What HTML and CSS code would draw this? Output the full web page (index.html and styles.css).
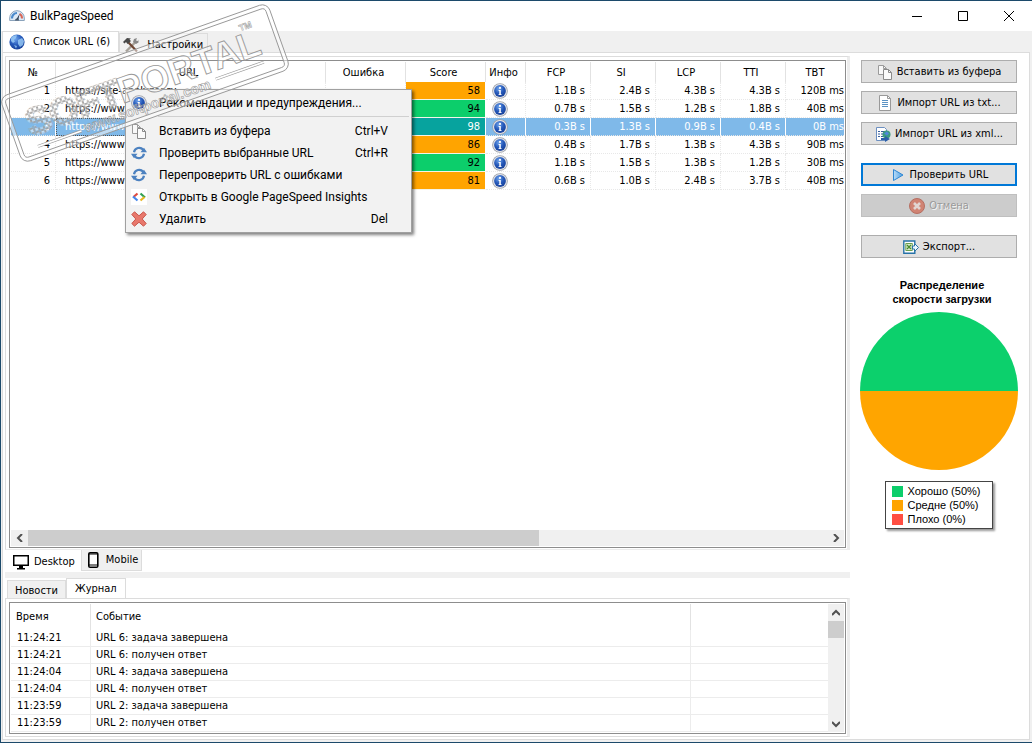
FILE: index.html
```html
<!DOCTYPE html>
<html lang="ru">
<head>
<meta charset="utf-8">
<title>BulkPageSpeed</title>
<link rel="stylesheet" href="styles.css">
</head>
<body>
<svg class="defs" aria-hidden="true">
  <defs>
    <radialGradient id="blue" cx="40%" cy="30%" r="75%"><stop offset="0" stop-color="#6fa4ec"/><stop offset=".55" stop-color="#2457b8"/><stop offset="1" stop-color="#173f96"/></radialGradient>
    <linearGradient id="play" x1="0" x2="1"><stop offset="0" stop-color="#b9dcf8"/><stop offset="1" stop-color="#4b9fe4"/></linearGradient>
    <symbol id="i-info" viewBox="0 0 16 16"><circle cx="8" cy="8" r="7.8" fill="#9b9fa8"/><circle cx="8" cy="8" r="7" fill="#e3e5ea"/><circle cx="8" cy="8" r="5.9" fill="url(#blue)"/><circle cx="8" cy="4.9" r="1.1" fill="#fff"/><path d="M6.6 7h2.2v4.2h.8v.9H6.5v-.9h.8V7.9h-.7z" fill="#fff"/></symbol>
    <symbol id="i-copy" viewBox="0 0 16 16"><path d="M1.5 1.5h5l3 3v6h-8z" fill="#f8f8f8" stroke="#9a9a9a"/><path d="M6.5 1.500v3h3" fill="none" stroke="#9a9a9a"/><path d="M6.500 5.500h5l3 3v7h-8z" fill="#fafafa" stroke="#8a8a8a"/><path d="M11.500 5.500v3h3" fill="none" stroke="#8a8a8a"/></symbol>
    <symbol id="i-sync" viewBox="0 0 16 16"><g fill="none" stroke="#4d82c0" stroke-width="2.200"><path d="M3 7.200A5.200 5.200 0 0 1 12.200 4.800"/><path d="M13 8.800A5.200 5.200 0 0 1 3.800 11.200"/></g><path d="M9.500 7.200h6.500l-3-4.500zM6.500 8.800H0l3 4.500z" fill="#4d82c0"/></symbol>
  </defs>
</svg>
<div class="window">
  <header class="titlebar">
    <svg class="icon" viewBox="0 0 16 16"><path d="M.7 12.500V10a7.300 7.300 0 0 1 14.600 0v2.500z" fill="#dce9f6" stroke="#8aa2bb"/><path d="M3 10.500A5 5 0 0 1 8 5" fill="none" stroke="#4b8acb" stroke-width="2.200"/><path d="M10.500 5.800A5 5 0 0 1 13 10.500" fill="none" stroke="#d96656" stroke-width="2"/><path d="M7 12l3.500-6-1.200 6z" fill="#24354b"/><path d="M6 12.500a2 2 0 0 1 4 0z" fill="#456"/></svg>
    <h1>BulkPageSpeed</h1>
    <div class="winbtns">
      <button aria-label="Свернуть"><svg viewBox="0 0 10 10"><path d="M0 5.500h10"/></svg></button>
      <button aria-label="Развернуть"><svg viewBox="0 0 10 10"><path d="M.5.5h9v9h-9z"/></svg></button>
      <button aria-label="Закрыть"><svg viewBox="0 0 10 10"><path d="M0 0l10 10M10 0L0 10"/></svg></button>
    </div>
  </header>
  <nav class="maintabs">
    <button class="maintab active"><svg class="icon" viewBox="0 0 16 16"><circle cx="8" cy="8" r="7.600" fill="url(#blue)"/><path d="M2 4c2-3 5-3 6-2.500L7 4 5 6l1 1.500L4 9 2 7zM9 6l4-2 2 3-1 4-3 2-2-3zM5 11l3 1-1 2.500z" fill="#9ccdf6" opacity=".8"/></svg>Список URL (6)</button>
    <button class="maintab"><svg class="icon" viewBox="0 0 16 16"><path d="M3 14.500L12.500 5" stroke="#a7a29a" stroke-width="2.400"/><path d="M10 5l1-3 3-1-1 2.500 2 .5.500-1.500v3L13 7z" fill="#888"/><path d="M5 5l9 9.500" stroke="#6f4734" stroke-width="2.200"/><path d="M0 5l4-4 4 .5-1.500 1L8 4 4.500 7 3 5 1.500 6.500z" fill="#484848"/></svg>Настройки</button>
  </nav>
  <main class="page">
    <div class="left">
      <section class="upper">
        <div class="grid-box">
          <div class="grid-view">
          <table class="grid">
            <colgroup><col class="c-num"><col class="c-url"><col class="c-err"><col class="c-score"><col class="c-info"><col class="c-m"><col class="c-m"><col class="c-m"><col class="c-m"><col></colgroup>
            <thead><tr><th>№</th><th>URL</th><th>Ошибка</th><th>Score</th><th>Инфо</th><th>FCP</th><th>SI</th><th>LCP</th><th>TTI</th><th>TBT</th></tr></thead>
            <tbody>
              <tr><td>1</td><td class="url">https://site-analyzer.ru</td><td></td><td class="mid">58</td><td class="info"><svg class="icon"><use href="#i-info"/></svg></td><td>1.1B s</td><td>2.4B s</td><td>4.3B s</td><td>4.3B s</td><td class="last">120B ms</td></tr>
              <tr><td>2</td><td class="url">https://www</td><td></td><td class="good">94</td><td class="info"><svg class="icon"><use href="#i-info"/></svg></td><td>0.7B s</td><td>1.5B s</td><td>1.2B s</td><td>1.8B s</td><td class="last">40B ms</td></tr>
              <tr class="selected"><td>3</td><td class="url">https://www</td><td></td><td class="good">98</td><td class="info"><svg class="icon"><use href="#i-info"/></svg></td><td>0.3B s</td><td>1.3B s</td><td>0.9B s</td><td>0.4B s</td><td class="last">0B ms</td></tr>
              <tr><td>4</td><td class="url">https://www</td><td></td><td class="mid">86</td><td class="info"><svg class="icon"><use href="#i-info"/></svg></td><td>0.4B s</td><td>1.7B s</td><td>1.3B s</td><td>4.3B s</td><td class="last">90B ms</td></tr>
              <tr><td>5</td><td class="url">https://www</td><td></td><td class="good">92</td><td class="info"><svg class="icon"><use href="#i-info"/></svg></td><td>1.1B s</td><td>1.5B s</td><td>1.3B s</td><td>1.2B s</td><td class="last">30B ms</td></tr>
              <tr><td>6</td><td class="url">https://www</td><td></td><td class="mid">81</td><td class="info"><svg class="icon"><use href="#i-info"/></svg></td><td>0.6B s</td><td>1.0B s</td><td>2.4B s</td><td>3.7B s</td><td class="last">40B ms</td></tr>
            </tbody>
          </table>
          </div>
          <div class="hscroll">
            <button aria-label="Влево"><svg viewBox="0 0 8 8"><path d="M6 0L2 4l4 4"/></svg></button>
            <div class="track"><div class="thumb"></div></div>
            <button aria-label="Вправо"><svg viewBox="0 0 8 8"><path d="M2 0l4 4-4 4"/></svg></button>
          </div>
        </div>
      </section>
      <nav class="devtabs">
        <button class="devtab active"><svg class="icon" viewBox="0 0 16 16"><path d="M0 1h16v11H0zM1.500 2.500v8h13v-8z" fill="#000" fill-rule="evenodd"/><path d="M6 12h4v2h2v1.500H4V14h2z"/></svg>Desktop</button>
        <button class="devtab"><svg class="icon" viewBox="0 0 16 16"><rect x="3.800" y=".8" width="9" height="14.400" rx="1.300" fill="#fff" stroke="#000" stroke-width="1.600"/><path d="M4 2h9M4 13h9" stroke="#000"/></svg>Mobile</button>
      </nav>
      <div class="splitter"></div>
      <nav class="logtabs">
        <button class="logtab">Новости</button>
        <button class="logtab active">Журнал</button>
      </nav>
      <section class="lower">
        <div class="log-box">
          <table class="log">
            <colgroup><col class="c-time"><col class="c-event"><col></colgroup>
            <thead><tr><th>Время</th><th>Событие</th><th></th></tr></thead>
            <tbody>
              <tr><td>11:24:21</td><td>URL 6: задача завершена</td><td></td></tr>
              <tr><td>11:24:21</td><td>URL 6: получен ответ</td><td></td></tr>
              <tr><td>11:24:04</td><td>URL 4: задача завершена</td><td></td></tr>
              <tr><td>11:24:04</td><td>URL 4: получен ответ</td><td></td></tr>
              <tr><td>11:23:59</td><td>URL 2: задача завершена</td><td></td></tr>
              <tr><td>11:23:59</td><td>URL 2: получен ответ</td><td></td></tr>
            </tbody>
          </table>
          <div class="vscroll">
            <button aria-label="Вверх"><svg viewBox="0 0 8 8"><path d="M0 6l4-4 4 4"/></svg></button>
            <div class="track"><div class="thumb"></div></div>
            <button aria-label="Вниз"><svg viewBox="0 0 8 8"><path d="M0 2l4 4 4-4"/></svg></button>
          </div>
        </div>
      </section>
    </div>
    <aside class="side">
      <div class="group">
        <button class="btn"><svg class="icon"><use href="#i-copy"/></svg>Вставить из буфера</button>
        <button class="btn"><svg class="icon" viewBox="0 0 16 16"><path d="M2.500.5h8l3 3v12h-11z" fill="#fff" stroke="#999"/><path d="M10.500.5v3h3" fill="none" stroke="#999"/><path d="M5 5.500h6M5 7.500h6M5 9.500h6M5 11.500h6" stroke="#5c93c4"/></svg>Импорт URL из txt...</button>
        <button class="btn"><svg class="icon" viewBox="0 0 16 16"><path d="M1.500 1.500h8l2 2v11h-10z" fill="#fff" stroke="#6c8fc0"/><path d="M3 5.500h2M6 5.500h4M3 8h2M6 8h3M3 10.500h2M6 10.500h2" stroke="#365d9c"/><circle cx="11.500" cy="8.500" r="4" fill="#3b9b80"/><path d="M9 7.500l3-2 2 2-2 2z" fill="#4f87dc"/><path d="M6 12h4v-2l5 3-5 3v-2H6z" fill="#2c5fa8"/></svg>Импорт URL из xml...</button>
      </div>
      <div class="group">
        <button class="btn primary"><svg class="icon" viewBox="0 0 16 16"><path d="M3.500 2.500l9.500 5.500-9.500 5.500z" fill="url(#play)" stroke="#2e86d2"/></svg>Проверить URL</button>
        <button class="btn" disabled><svg class="icon" viewBox="0 0 16 16"><circle cx="8" cy="8" r="7.500" fill="#d08373" stroke="#b56f62"/><path d="M5 5l6 6M11 5l-6 6" stroke="#e2d5d2" stroke-width="2.600"/></svg>Отмена</button>
      </div>
      <div class="group">
        <button class="btn"><svg class="icon" viewBox="0 0 16 16"><path d="M11.800 5V2H.8v12.300h11V12" fill="#fff" stroke="#2773a8" stroke-width="1.400"/><path d="M2.800 4.500h6.500v7H2.800z" fill="#dcebcf" stroke="#6aa04f"/><path d="M4 6l4 4M8 6l-4 4" stroke="#478b2c" stroke-width="1.300"/><path d="M9.500 7h2V4.500l4 4-4 4V10h-2z" fill="#edf7ff" stroke="#2773a8"/></svg>Экспорт...</button>
      </div>
      <figure class="chart">
        <figcaption>Распределение<br>скорости загрузки</figcaption>
        <div class="pie"></div>
        <ul class="legend">
          <li><span class="key good"></span>Хорошо (50%)</li>
          <li><span class="key mid"></span>Средне (50%)</li>
          <li><span class="key bad"></span>Плохо (0%)</li>
        </ul>
      </figure>
    </aside>
  </main>
</div>
<div class="menu">
  <button><svg class="icon"><use href="#i-info"/></svg><span>Рекомендации и предупреждения...</span></button>
  <hr>
  <button><svg class="icon"><use href="#i-copy"/></svg><span>Вставить из буфера</span><kbd>Ctrl+V</kbd></button>
  <button><svg class="icon"><use href="#i-sync"/></svg><span>Проверить выбранные URL</span><kbd>Ctrl+R</kbd></button>
  <button><svg class="icon"><use href="#i-sync"/></svg><span>Перепроверить URL с ошибками</span></button>
  <button><svg class="icon" viewBox="0 0 16 16"><path d="M0 0h16v16H0z" fill="#fff"/><g fill="none" stroke-width="2.200"><path d="M6.500 4.500L2.500 8" stroke="#e04a3f"/><path d="M2 7.500L6.500 11.500" stroke="#4486ec"/><path d="M9.500 4.500L14 8.500" stroke="#30a052"/><path d="M13.500 8L9.500 11.500" stroke="#e8b520"/></g></svg><span>Открыть в Google PageSpeed Insights</span></button>
  <button><svg class="icon" viewBox="0 0 16 16"><path d="M3.500.8L8 4.800 12.500.8l2.700 2.700L11.200 8l4 4.500-2.700 2.700L8 11.200l-4.500 4L.8 12.500l4-4.500-4-4.500z" fill="#e8786c" stroke="#c9574c"/></svg><span>Удалить</span><kbd>Del</kbd></button>
</div>
<svg class="stamp" viewBox="0 0 292 170" aria-hidden="true">
  <defs><pattern id="mesh" width="5" height="5" patternUnits="userSpaceOnUse"><rect x=".5" y=".5" width="4" height="4" rx="1" fill="#fff" fill-opacity=".3" stroke="#999" stroke-width=".7"/></pattern></defs>
  <g transform="translate(145 83) rotate(-19.500)" font-family="Liberation Sans, sans-serif" font-weight="bold">
    <g fill="none">
      <rect x="-140" y="-33" width="280" height="66" rx="6" stroke="#fff" stroke-opacity=".5" stroke-width="4"/>
      <rect x="-142" y="-35" width="284" height="70" rx="8" stroke="#999" stroke-width=".9"/>
      <rect x="-138" y="-31" width="276" height="62" rx="4" stroke="#999" stroke-width=".9"/>
      <path d="M-122 24h46M68 20h51" stroke="#999" stroke-width="3"/>
      <path d="M-122 24h46M68 20h51" stroke="#fff" stroke-width="1.800"/>
    </g>
    <text x="-125" y="12" font-size="37" fill="url(#mesh)" stroke="url(#mesh)" stroke-width="3">SOFT</text>
    <g fill="#fff" fill-opacity=".35" stroke="#999" stroke-width=".9">
      <text x="-28" y="12" font-size="37">PORTAL</text>
      <text x="107" y="-17" font-size="9" stroke-width=".5">TM</text>
      <text x="-72" y="27" font-size="14" stroke-width=".6">www.softportal.com</text>
    </g>
  </g>
</svg>
</body>
</html>
```
FILE: styles.css
```css
* { box-sizing: border-box; }
body {
  margin: 0;
  font: 11px/16px "DejaVu Sans Condensed", "Noto Sans", sans-serif;
  color: #000;
  background: #fff;
}
button { font: inherit; color: inherit; border: 0; padding: 0; background: none; white-space: nowrap; }
table { border-collapse: separate; border-spacing: 0; table-layout: fixed; }
.defs { position: absolute; width: 0; height: 0; }
.icon { width: 16px; height: 16px; flex: none; display: block; }
.window {
  min-height: 100vh;
  display: flex;
  flex-direction: column;
  border: 1px solid #1c4a6b;
  border-right: 0;
  background: #f0f0f0;
}
.titlebar { display: flex; align-items: center; height: 30px; padding-left: 8px; background: #fff; }
.titlebar h1 { flex: 1; margin: 0 0 0 5px; font: 12px/16px Roboto, "Noto Sans", sans-serif; }
.winbtns { display: flex; }
.winbtns button { width: 46px; height: 28px; display: grid; place-items: center; }
.winbtns svg { width: 10px; height: 10px; fill: none; stroke: #000; overflow: visible; }

.maintabs { display: flex; align-items: flex-end; height: 21px; padding-left: 1px; }
.maintab {
  display: flex; align-items: center; gap: 8px;
  height: 19px; padding: 3px 4px 0 3px;
  border: 1px solid #dcdcdc; border-bottom: 0;
}
.maintab.active { height: 21px; padding: 0 8px 0 6px; background: #fff; }

.page {
  flex: 1; display: flex;
  margin: 0 2px 2px 1px;
  border: 1px solid #dcdcdc;
  background: #fff;
}
.left { flex: 1; min-width: 0; display: flex; flex-direction: column; margin-left: 2px; }
.upper { flex: 1; display: flex; margin-top: 3px; padding: 3px 1px 1px 3px; border: 1px solid #dcdcdc; border-right: 3px solid #ececec; border-bottom-color: #ececec; }
.grid-box { flex: 1; min-width: 0; display: flex; flex-direction: column; padding: 1px; border: 1px solid #8d8d8d; }
.grid-view { flex: 1; overflow: hidden; }
.grid { width: 100%; }
.c-num { width: 45px; } .c-url { width: 270px; } .c-err { width: 80px; } .c-score { width: 80px; }
.c-info { width: 40px; } .c-m { width: 65px; }
.grid th { height: 20px; padding: 2px 4px 0 0; font-weight: normal; border-right: 1px solid #e2e2e2; }
.grid th:first-child, .grid th:last-child { padding-right: 0; }
.grid th:last-child, .grid td:last-child { border-right: 0; }
.grid td {
  height: 18px; padding: 0 5px 0 0; line-height: 17px;
  text-align: right; white-space: nowrap; overflow: hidden;
  border-right: 1px dotted #e8e8e8; border-bottom: 1px dotted #e8e8e8;
}
.grid td.url { text-align: left; padding-left: 9px; }
.grid td.info { padding: 0 6px; }
.grid td.last { padding-right: 0; }
.grid .mid, .key.mid { background: #ffa400; }
.grid .good, .key.good { background: #0cce6b; }
.key.bad { background: #ff4e42; }
.grid td.mid, .grid td.good { border-bottom: 1px solid #f4f4e8; border-right: 1px solid #fff; }
.grid .selected td { background: #7fb9e9; color: #fff; border-right-color: #fff; border-right-style: solid; }
.grid .selected td.good { background: #07a39e; }
.grid .selected td.url { outline: 1px dotted #555; outline-offset: -1px; }

.hscroll { display: flex; height: 16px; background: #f0f0f0; }
.hscroll button { width: 17px; display: grid; place-items: center; }
.hscroll .track { flex: 1; }
.hscroll .thumb { width: 64%; height: 16px; background: #cdcdcd; }
.hscroll svg, .vscroll svg { width: 8px; height: 8px; fill: none; stroke: #505050; stroke-width: 2; }

.devtabs { display: flex; align-items: flex-start; height: 22px; padding-left: 1px; }
.devtab { display: flex; align-items: center; gap: 5px; height: 21px; padding: 0 3px; border: 1px solid #dcdcdc; border-top: 0; background: #f0f0f0; }
.devtab.active { height: 22px; padding: 2px 6px 0 7px; border: 0; background: #fff; }
.splitter { height: 6px; background: #f0f0f0; }
.logtabs { display: flex; align-items: flex-end; height: 20px; padding-left: 2px; }
.logtab { height: 18px; padding: 2px 7px 0; border: 1px solid #dcdcdc; border-bottom: 0; background: #f0f0f0; }
.logtab.active { height: 20px; padding: 0 8px; background: #fff; }
.lower { padding: 3px 1px 2px 3px; border: 1px solid #dcdcdc; border-right: 3px solid #ececec; margin-bottom: 2px; }
.log-box { display: flex; padding: 1px; border: 1px solid #8d8d8d; }
.log { flex: 1; }
.c-time { width: 80px; } .c-event { width: 600px; }
.log th { height: 26px; padding: 0 5px; font-weight: normal; text-align: left; border-right: 1px solid #e2e2e2; }
.log th:last-child, .log td:last-child { border-right: 0; }
.log td { height: 17px; padding: 0 6px; line-height: 16px; border-right: 1px solid #ececec; border-bottom: 1px solid #ececec; }
.log td + td { padding-left: 5px; }
.vscroll { display: flex; flex-direction: column; width: 16px; background: #f0f0f0; }
.vscroll button { height: 17px; display: grid; place-items: center; }
.vscroll .track { flex: 1; }
.vscroll .thumb { height: 17px; background: #cdcdcd; }

.side { flex: none; width: 179px; display: flex; flex-direction: column; gap: 18px; padding: 7px 12px 0 11px; }
.group { display: flex; flex-direction: column; gap: 8px; }
.btn {
  display: flex; align-items: center; justify-content: center; gap: 4px;
  height: 23px; border: 1px solid #adadad; background: #e1e1e1;
}
.btn.primary { border: 2px solid #0078d7; }
.btn:disabled { background: #ccc; border-color: #bfbfbf; color: #9a9a9a; text-shadow: 1px 1px #f4f4f4; }
.chart { margin: 2px 0 0; display: flex; flex-direction: column; align-items: center; font: 11px/14px "Liberation Sans", Arial, sans-serif; }
.chart figcaption { margin-left: 6px; font-weight: bold; text-align: center; }
.pie { width: 158px; height: 158px; margin-top: 6px; border-radius: 50%; background: linear-gradient(#0cd06c 50%, #ffa500 50%); }
.legend { list-style: none; margin: 11px 0 0; padding: 2px 12px 2px 6px; border: 1px solid #444; background: #fff; box-shadow: 2px 2px 2px #999; }
.legend li { display: flex; align-items: center; gap: 5px; }
.key { width: 11px; height: 11px; }

.menu {
  position: absolute; left: 125px; top: 89px; width: 287px;
  padding: 2px; border: 1px solid #a0a0a0; background: #f2f2f2;
  box-shadow: 2px 2px 3px rgba(0, 0, 0, .5);
  font: 12px/22px Roboto, "Noto Sans", sans-serif;
}
.menu button { display: flex; align-items: center; gap: 12px; width: 100%; height: 22px; padding: 0 21px 0 3px; }
.menu kbd { margin-left: auto; font: inherit; }
.menu hr { height: 1px; margin: 2px 0 3px 30px; border: 0; background: #d0d0d0; }
.stamp { position: absolute; left: 0; top: 0; width: 292px; height: 170px; pointer-events: none; }
```
